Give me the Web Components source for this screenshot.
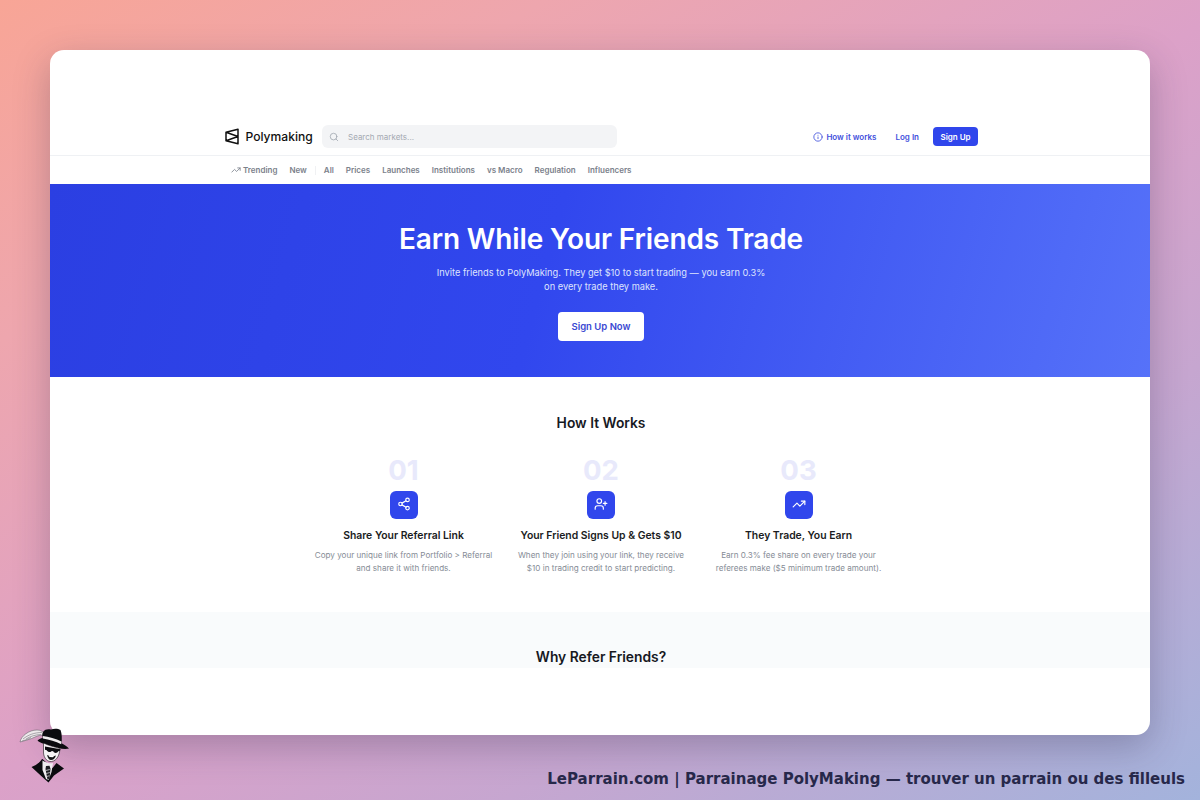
<!DOCTYPE html>
<html><head><meta charset="utf-8">
<style>
html,body{margin:0;padding:0;height:800px;overflow:hidden}
body{font-family:Inter,"Liberation Sans",sans-serif}
</style></head><body>
<promo-stage>
  <app-window>
    <top-bar></top-bar>
    <cat-nav></cat-nav>
    <hero-banner></hero-banner>
    <how-section></how-section>
    <why-section></why-section>
  </app-window>
</promo-stage>
<script>
const def=(name,html)=>customElements.define(name,class extends HTMLElement{
  constructor(){super();this.attachShadow({mode:'open'}).innerHTML=html;}
});
const I=(d,s=24,c='currentColor',w=2)=>`<svg width="${s}" height="${s}" viewBox="0 0 24 24" fill="none" stroke="${c}" stroke-width="${w}" stroke-linecap="round" stroke-linejoin="round">${d}</svg>`;
const trend='<polyline points="22 7 13.5 15.5 8.5 10.5 2 17"/><polyline points="16 7 22 7 22 13"/>';

def('promo-stage',`<style>
:host{display:block;position:relative;width:1200px;height:800px;box-sizing:border-box;padding:50px;
background:linear-gradient(148deg,#f8a596 0%,#eea6ae 22%,#dca1c8 50%,#c6a6d0 72%,#a3b3dc 100%)}
.cap{position:absolute;right:15px;bottom:11px;font:700 15px/20px "DejaVu Sans",sans-serif;color:#27284a;white-space:nowrap}
.logo{position:absolute;left:15px;top:725px}
</style><slot></slot>
<svg class="logo" width="60" height="60" viewBox="0 0 60 60">
<path d="M5 17C6 11 14 5 22 5c4 0 7 2 8 5-4 0-7 .5-10 2-5 2.500-10 3.500-15 5z" fill="#eeeaec" stroke="#55525a" stroke-width=".5"/>
<path d="M8 14c5-4 11-6.500 19-6.500M11 14c4-2.500 9-4.300 15-4.500M7 16c3-.8 6-1.800 9-3.500" stroke="#77747c" stroke-width=".6" fill="none"/>
<path d="M28 7c2-3 5-3 8-2.500 3-1 7-1 9.500.5 1.500 3.500 1.500 9 1 14L28 14c-1-2.500-1-5 0-7z" fill="#0b0b0f"/>
<path d="M22.500 15.500c1-1.200 3-2.200 5.500-2.500 7 1 14 3 19 5.500 3 1.500 5.500 3.200 7 5-5 1.200-12-.5-17-2.300-6-1.800-12-2.800-14.500-5.700z" fill="#0b0b0f"/>
<path d="M27.800 11c6 .8 13 2.800 18.700 5.500l-.3 2.700c-5.500-2.600-12-4.700-18.300-5.700z" fill="#efecee"/>
<path d="M28.500 18c5 2.500 11 4 16.500 5.500-.3 6-3 12.500-8.500 13-4 .5-7.500-3-8-8.500z" fill="#f5f2f4" stroke="#141416" stroke-width=".6"/>
<path d="M30 21.500l15.500 2.800-.8 1.800-1.500.2c-1 2.200-4 2.200-5 0l-1.500-.3c-1 1.800-4 1.300-5-.7l-1.700-.6z" fill="#0b0b0f"/>
<path d="M32 30c3 1.500 6.500 1.700 9 .5-1 3-2.800 4.500-5 4.500-1.800 0-3.200-2-4-5z" fill="#141416"/>
<path d="M33.500 30.800l5.500.3-1 1.100-3.500-.3z" fill="#fff"/>
<path d="M27.500 34l10 9 4-5 7.500 5.500-10 7-5.500 7-4-3.500-13-12c4-1.500 8-4 10.500-8z" fill="#0b0b0f"/>
<path d="M27.500 35.500c2 1.500 7 3.500 10.500 2.500l-1.500 9-3 8-2.500-1-3.500-9z" fill="#f0edf0"/>
<path d="M31 41l3.500-.3 1 3-1 9.800-2 1-2-10.500z" fill="#1d1d22"/>
<path d="M30.800 45.500l4-1M31.200 48.500l3.600-1M31.800 51.500l2.600-.8" stroke="#d8d6da" stroke-width=".8"/>
</svg>
<span class="cap">LeParrain.com | Parrainage PolyMaking — trouver un parrain ou des filleuls</span>`);

def('app-window',`<style>
:host{display:block;height:685px;background:#fff;border-radius:14px;overflow:hidden;box-shadow:0 12px 36px rgba(40,40,70,.28)}
.wrap{padding-top:74px}
</style><div class="wrap"><slot></slot></div>`);

def('top-bar',`<style>
:host{display:flex;align-items:center;height:23px;padding:1px 172px 7px 175px;border-bottom:1px solid #eff1f4;box-sizing:content-box;color:#111}
.brand{display:flex;align-items:center;gap:6.5px;font-size:12.1px;font-weight:500;width:97px;flex:none}
.brand svg{flex:none}
.search{width:295px;height:23px;border-radius:6px;background:#f3f4f6;display:flex;align-items:center;padding-left:7px;box-sizing:border-box;gap:9px;color:#a4a9b2;font-size:8px;flex:none}
.sp{flex:1}
.act{display:flex;align-items:center;font-size:8px;font-weight:600;color:#3f4fdc}
.how{display:flex;align-items:center;gap:3px}
.log{margin-left:19px}
.btn{margin-left:14px;background:#3046ec;color:#fff;border-radius:4px;height:19px;width:45px;display:flex;align-items:center;justify-content:center}
</style>
<div class="brand"><svg width="14" height="17" viewBox="0 0 14 17" fill="none" stroke="#111" stroke-width="1.5" stroke-linejoin="round"><path d="M13 1.300 1 4.300v8.400l12 3zM1 4.300l12 4.200-12 4.200"/></svg>Polymaking</div>
<div class="search">${I('<circle cx="11" cy="11" r="8"/><path d="m21 21-4.300-4.300"/>',10,'#a4a9b2')}<span>Search markets...</span></div>
<div class="sp"></div>
<div class="act"><span class="how">${I('<circle cx="12" cy="12" r="10"/><path d="M12 16v-4M12 8h.01"/>',10)}How it works</span><span class="log">Log In</span><span class="btn">Sign Up</span></div>`);

def('cat-nav',`<style>
:host{display:flex;align-items:center;height:28px;padding-left:181px;font-size:8px;font-weight:600;color:#7b818b;gap:12px;white-space:nowrap}
.t{display:flex;align-items:center;gap:2px}
.d{width:1px;height:9px;background:#f0f1f3;margin:0 -4px}
</style><span class="t">${I(trend,10)}Trending</span><span>New</span><i class="d"></i><span>All</span><span>Prices</span><span>Launches</span><span>Institutions</span><span>vs Macro</span><span>Regulation</span><span>Influencers</span>`);

def('hero-banner',`<style>
:host{display:flex;flex-direction:column;align-items:center;height:193px;box-sizing:border-box;padding:38px 0 0 2px;color:#fff;background:linear-gradient(105deg,#2b3fe2 0%,#3147ee 45%,#5672f9 100%)}
h1{margin:0;font-size:28px;line-height:35px;font-weight:600;letter-spacing:-.14px}
p{margin:9px 0 0;width:340px;text-align:center;font-size:9.25px;line-height:14px;color:#dfe4fd}
a{margin-top:18px;width:86px;height:29px;border-radius:4px;background:#fff;color:#3a48d2;font-size:9.5px;font-weight:600;display:flex;align-items:center;justify-content:center}
</style><h1>Earn While Your Friends Trade</h1>
<p>Invite friends to PolyMaking. They get $10 to start trading — you earn 0.3% on every trade they make.</p><a>Sign Up Now</a>`);

def('step-card',`<style>
:host{display:flex;flex-direction:column;align-items:center;width:190px;text-align:center}
.n{font-size:27.5px;line-height:28px;font-weight:700;color:#e8e9fb}
.i{width:28px;height:28px;border-radius:6px;background:#3046ec;display:flex;align-items:center;justify-content:center;color:#fff;margin-top:7px}
h3{margin:8px 0 0;font-size:10.4px;line-height:17px;font-weight:600;color:#1a1c22;white-space:nowrap}
p{margin:5px 0 0;font-size:8.1px;line-height:13.2px;color:#868c96;white-space:nowrap}
</style><div class="n"><slot name="n"></slot></div><div class="i"><slot name="i"></slot></div><h3><slot name="t"></slot></h3><p><slot name="d"></slot></p>`);

def('how-section',`<style>
:host{display:block;height:235px;box-sizing:border-box;padding:37px 0 0 2px}
h2{margin:0;text-align:center;font-size:13.8px;line-height:18px;font-weight:600;color:#17191f}
.g{display:flex;justify-content:center;margin-top:24px;gap:7.5px}
</style><h2>How It Works</h2><div class="g">
<step-card><span slot="n">01</span><span slot="i">${I('<circle cx="18" cy="5" r="3"/><circle cx="6" cy="12" r="3"/><circle cx="18" cy="19" r="3"/><path d="m8.600 13.500 6.800 4M15.400 6.500l-6.800 4"/>',14)}</span><span slot="t">Share Your Referral Link</span><span slot="d">Copy your unique link from Portfolio &gt; Referral<br>and share it with friends.</span></step-card>
<step-card><span slot="n">02</span><span slot="i">${I('<path d="M16 21v-2a4 4 0 0 0-4-4H6a4 4 0 0 0-4 4v2"/><circle cx="9" cy="7" r="4"/><path d="M19 8v6M22 11h-6"/>',14)}</span><span slot="t">Your Friend Signs Up &amp; Gets $10</span><span slot="d">When they join using your link, they receive<br>$10 in trading credit to start predicting.</span></step-card>
<step-card><span slot="n">03</span><span slot="i">${I(trend,14)}</span><span slot="t">They Trade, You Earn</span><span slot="d">Earn 0.3% fee share on every trade your<br>referees make ($5 minimum trade amount).</span></step-card>
</div>`);

def('why-section',`<style>
:host{display:block;height:56px;box-sizing:border-box;padding:36px 0 0 2px;background:#f9fbfc}
h2{margin:0;text-align:center;font-size:13.8px;line-height:18px;font-weight:600;color:#17191f}
</style><h2>Why Refer Friends?</h2>`);
</script>
</body></html>
